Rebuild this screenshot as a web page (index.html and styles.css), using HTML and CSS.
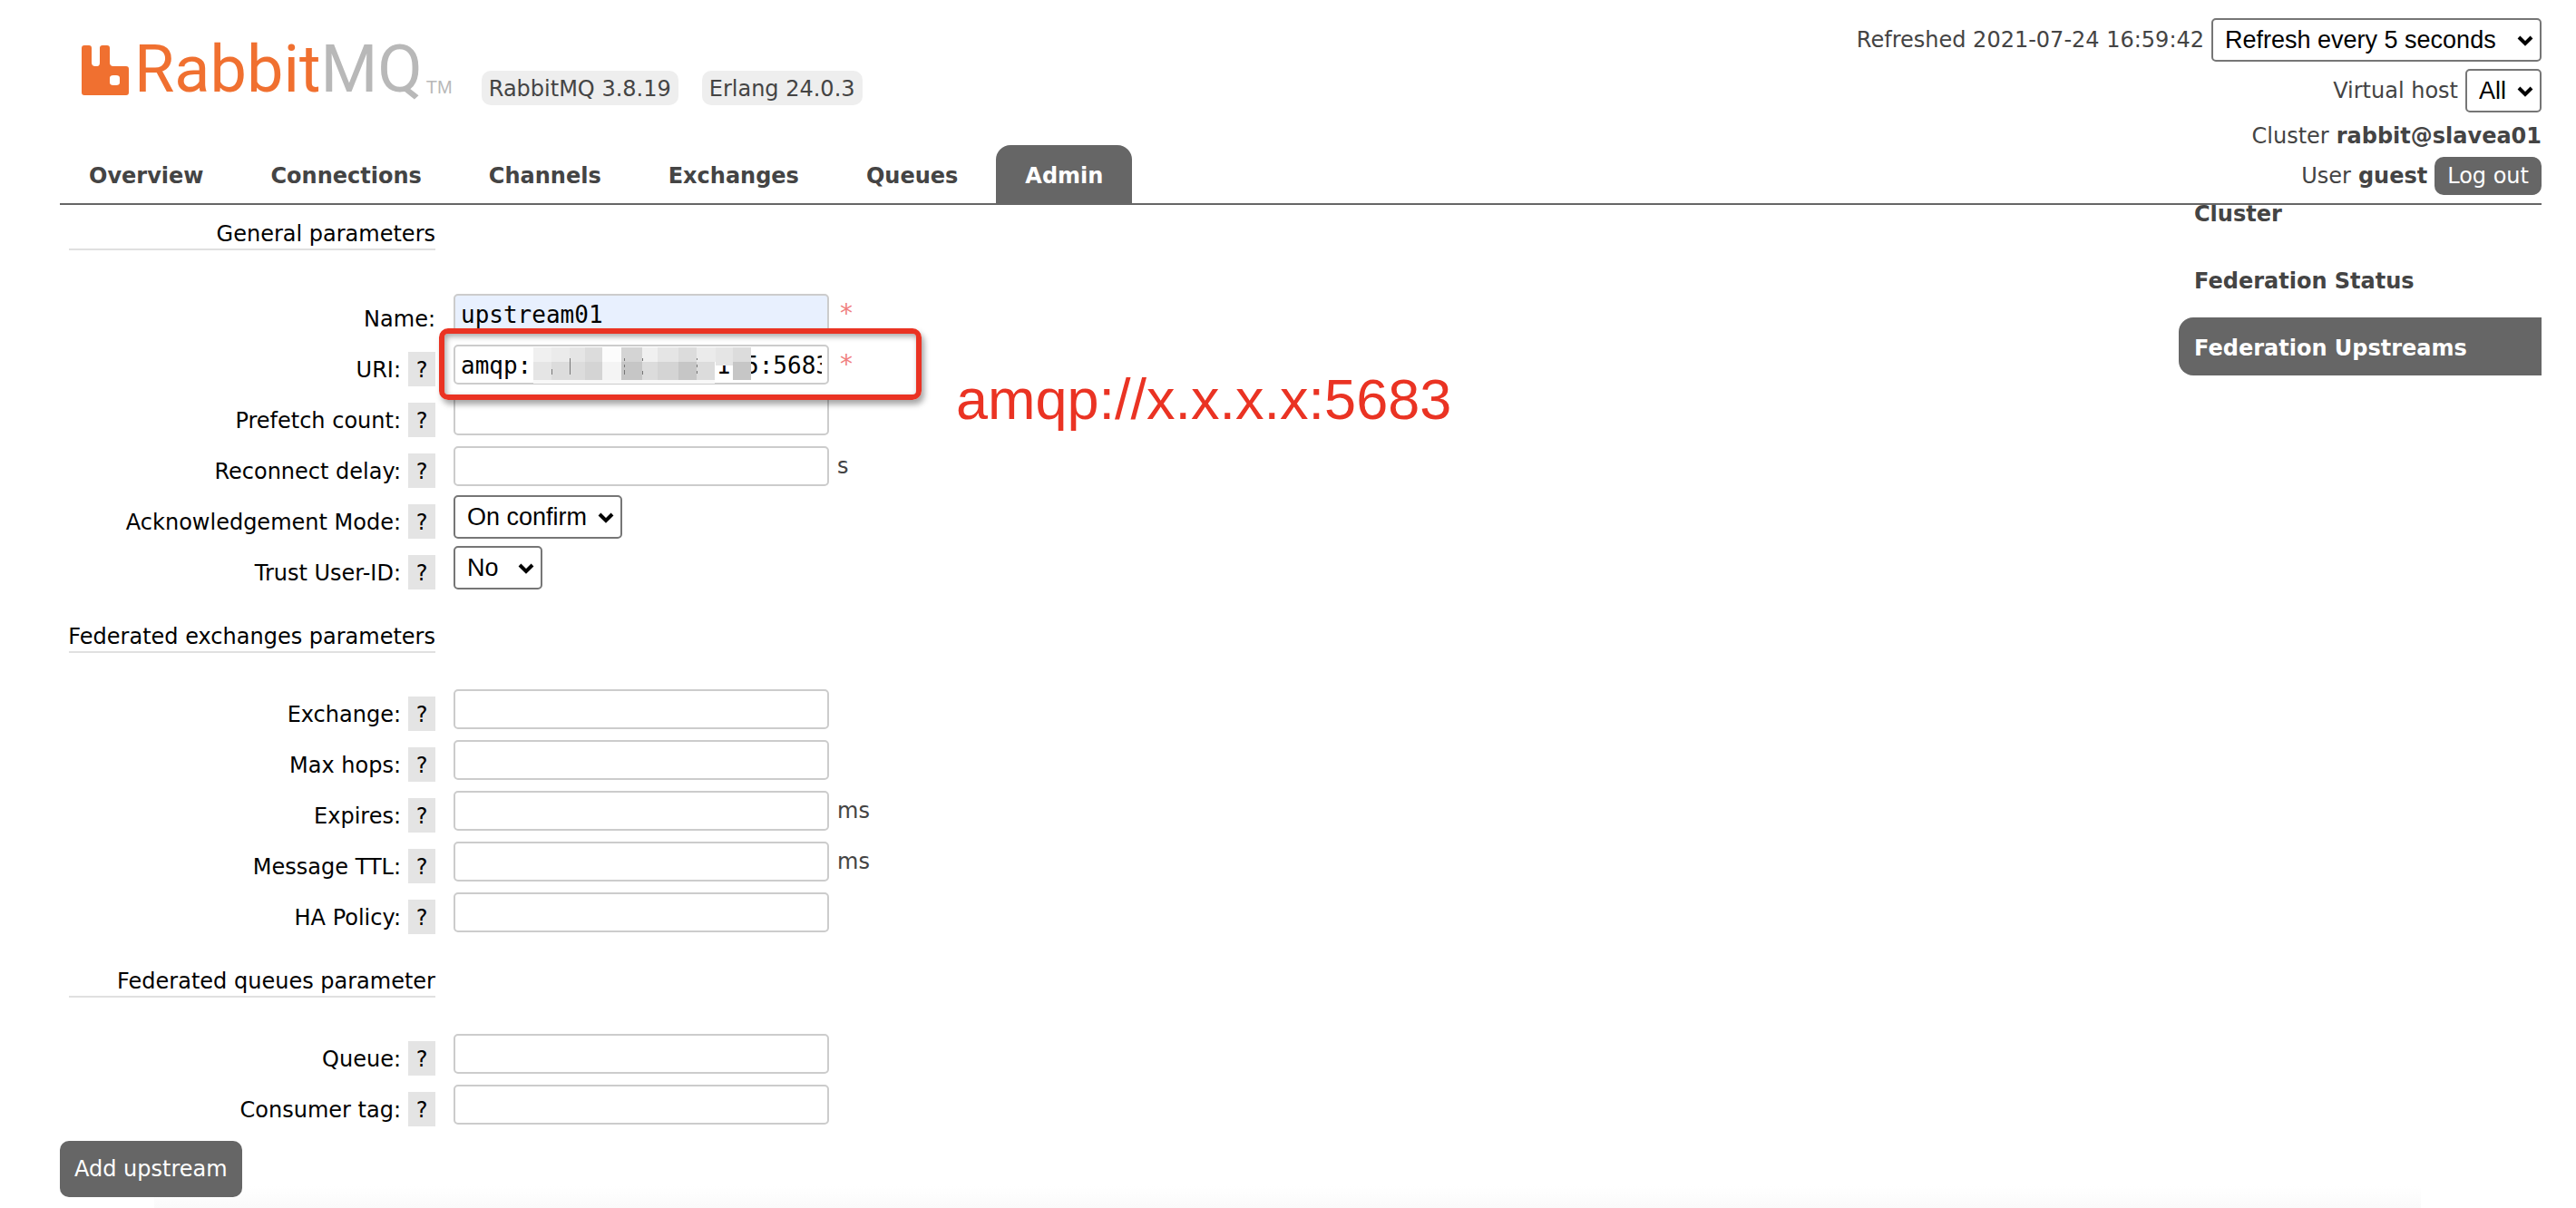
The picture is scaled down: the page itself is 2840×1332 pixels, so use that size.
FILE: index.html
```
<!DOCTYPE html>
<html lang="en">
<head>
<meta charset="utf-8">
<title>RabbitMQ Management</title>
<link rel="stylesheet" href="styles.css">
</head>
<body>
<header class="header">
  <div class="masthead">
    <a class="logo" href="#" aria-label="RabbitMQ">
      <svg class="logo-mark" viewBox="0 0 52 55" aria-hidden="true"><path fill-rule="evenodd" d="M3 0H8Q11 0 11 3V19Q11 23 15 23H17Q20 23 20 19V3Q20 0 23 0H28Q31 0 31 3V19Q31 23 35 23H49Q52 23 52 26V52Q52 55 49 55H3Q0 55 0 52V3Q0 0 3 0ZM35 33Q31 33 31 36V41Q31 44 35 44H38Q42 44 42 41V36Q42 33 38 33Z"/></svg>
      <span class="logo-name">Rabbit<span class="logo-grey">MQ</span></span>
      <span class="logo-tm">TM</span>
    </a>
    <span class="version">RabbitMQ 3.8.19</span>
    <span class="version">Erlang 24.0.3</span>
  </div>
  <nav class="tabs">
    <a class="tab" href="#">Overview</a>
    <a class="tab" href="#">Connections</a>
    <a class="tab" href="#">Channels</a>
    <a class="tab" href="#">Exchanges</a>
    <a class="tab" href="#">Queues</a>
    <a class="tab tab-active" href="#">Admin</a>
  </nav>
  <div class="session">
    <div class="session-row session-tall"><label for="refresh">Refreshed 2021-07-24 16:59:42</label>
      <span class="select-wrap"><select id="refresh" class="select select-refresh"><option>Refresh every 5 seconds</option></select><svg class="chevron" viewBox="0 0 18 12" aria-hidden="true"><path d="M2 2l7 7 7-7"/></svg></span></div>
    <div class="session-row session-tall"><label for="vhost">Virtual host</label>
      <span class="select-wrap"><select id="vhost" class="select select-vhost"><option>All</option></select><svg class="chevron" viewBox="0 0 18 12" aria-hidden="true"><path d="M2 2l7 7 7-7"/></svg></span></div>
    <div class="session-row">Cluster <b>rabbit@slavea01</b></div>
    <div class="session-row">User <b>guest</b> <button class="logout" type="button">Log out</button></div>
  </div>
</header>

<div class="page">
  <main class="main">
    <form>
      <section class="group">
        <h3 class="group-title group-title-first">General parameters</h3>
        <div class="row"><label class="label" for="name">Name:</label><div class="field"><input id="name" class="input input-filled" type="text" value="upstream01"><span class="required">*</span></div></div>
        <div class="row"><span class="label"><label for="uri">URI:</label><button class="help" type="button">?</button></span>
          <div class="field">
            <input id="uri" class="input" type="text" value="amqp:             1 5:5683"><span class="required">*</span>
            <svg class="mosaic" viewBox="0 0 240 40" aria-hidden="true">
              <path fill="#f8f8f8" d="M0 36h200v4H0z"/>
              <path fill="#f0f0f0" d="M0 0h20v16H0zM120 0h17v16h-17z"/>
              <path fill="#ebebeb" d="M20 0h20v16H20zM180 0h21v16h-21z"/>
              <path fill="#e5e5e5" d="M40 0h17v16H40zM137 0h23v16h-23zM201 0h19v20h-19zM0 16h20v20H0z"/>
              <path fill="#dcdcdc" d="M57 0h19v16H57zM160 0h20v16h-20zM220 0h20v16h-20zM20 16h37v20H20zM120 16h17v20h-17zM180 16h20v20h-20z"/>
              <path fill="#fcfcfc" d="M76 0h21v16H76z"/>
              <path fill="#f4f4f4" d="M76 16h21v20H76z"/>
              <path fill="#d4d4d4" d="M97 0h23v16H97zM57 16h19v20H57zM137 16h23v20h-23z"/>
              <path fill="#c6c6c6" d="M97 16h23v20H97zM160 16h20v20h-20zM220 16h20v20h-20z"/>
              <path stroke="#777" d="M40.500 12v18M20.500 24v6M100.500 12v3M100.500 19v3M100.500 25v5M120.500 12v3M120.500 26v4M180.500 12v2M180.500 19v3M180.500 26v3"/>
            </svg>
            <div class="marker"></div>
            <div class="note">amqp://x.x.x.x:5683</div>
          </div></div>
        <div class="row"><span class="label"><label for="prefetch">Prefetch count:</label><button class="help" type="button">?</button></span><div class="field"><input id="prefetch" class="input" type="text"></div></div>
        <div class="row"><span class="label"><label for="delay">Reconnect delay:</label><button class="help" type="button">?</button></span><div class="field"><input id="delay" class="input" type="text"><span class="unit">s</span></div></div>
        <div class="row"><span class="label"><label for="ack">Acknowledgement Mode:</label><button class="help" type="button">?</button></span><div class="field field-select"><span class="select-wrap"><select id="ack" class="select select-ack"><option>On confirm</option></select><svg class="chevron" viewBox="0 0 18 12" aria-hidden="true"><path d="M2 2l7 7 7-7"/></svg></span></div></div>
        <div class="row"><span class="label"><label for="trust">Trust User-ID:</label><button class="help" type="button">?</button></span><div class="field field-select"><span class="select-wrap"><select id="trust" class="select select-trust"><option>No</option></select><svg class="chevron" viewBox="0 0 18 12" aria-hidden="true"><path d="M2 2l7 7 7-7"/></svg></span></div></div>
      </section>
      <section class="group">
        <h3 class="group-title">Federated exchanges parameters</h3>
        <div class="row"><span class="label"><label for="exchange">Exchange:</label><button class="help" type="button">?</button></span><div class="field"><input id="exchange" class="input" type="text"></div></div>
        <div class="row"><span class="label"><label for="hops">Max hops:</label><button class="help" type="button">?</button></span><div class="field"><input id="hops" class="input" type="text"></div></div>
        <div class="row"><span class="label"><label for="expires">Expires:</label><button class="help" type="button">?</button></span><div class="field"><input id="expires" class="input" type="text"><span class="unit">ms</span></div></div>
        <div class="row"><span class="label"><label for="ttl">Message TTL:</label><button class="help" type="button">?</button></span><div class="field"><input id="ttl" class="input" type="text"><span class="unit">ms</span></div></div>
        <div class="row"><span class="label"><label for="ha">HA Policy:</label><button class="help" type="button">?</button></span><div class="field"><input id="ha" class="input" type="text"></div></div>
      </section>
      <section class="group">
        <h3 class="group-title">Federated queues parameter</h3>
        <div class="row"><span class="label"><label for="queue">Queue:</label><button class="help" type="button">?</button></span><div class="field"><input id="queue" class="input" type="text"></div></div>
        <div class="row"><span class="label"><label for="tag">Consumer tag:</label><button class="help" type="button">?</button></span><div class="field"><input id="tag" class="input" type="text"></div></div>
      </section>
      <button class="submit" type="button">Add upstream</button>
    </form>
  </main>
  <aside class="side">
    <a class="side-link" href="#">Cluster</a>
    <a class="side-link" href="#">Federation Status</a>
    <a class="side-link side-active" href="#">Federation Upstreams</a>
  </aside>
</div>
</body>
</html>
```
FILE: styles.css
```
* { box-sizing: border-box; }

body {
  margin: 0;
  min-height: 100vh;
  background: #fff linear-gradient(to top, #fafafa, #fff) 50% 100% / 88% 24px no-repeat;
  color: #444;
  font: 24px/34px Verdana, "DejaVu Sans", sans-serif;
}

a { color: inherit; text-decoration: none; }
button, input, select { margin: 0; }

/* Header */
.header {
  position: relative;
  z-index: 1;
  display: grid;
  grid-template-columns: 1fr auto;
  grid-template-rows: 160px auto;
  margin: 0 38px 0 66px;
  border-bottom: 2px solid #666;
  background: #fff;
}

.masthead { display: flex; align-items: flex-start; gap: 26px; padding: 49px 0 0 24px; }
.logo { display: flex; align-items: flex-end; height: 56px; margin-right: 6px; color: #f07030; }
.logo-mark { width: 52px; height: 55px; fill: currentColor; }
.logo-name { margin-left: 6px; font: 72px/56px Roboto, sans-serif; }
.logo-grey { color: #b8b8b8; }
.logo-tm { margin-left: 4px; color: #b8b8b8; font: 20px/18px "Liberation Sans", Arial, sans-serif; }
.version { margin-top: 29px; padding: 3px 8px 1px; border-radius: 10px; background: #eee; }

.tabs { grid-row: 2; display: flex; gap: 10px; }
.tab { padding: 17px 32px 13px; border-radius: 16px 16px 0 0; font-weight: bold; }
.tab-active { background: #666; color: #fff; }

.session {
  grid-column: 2;
  grid-row: 1 / 3;
  display: flex;
  flex-direction: column;
  align-items: flex-end;
  padding-top: 16px;
}
.session-row { display: flex; align-items: center; gap: 8px; height: 44px; }
.session-tall { height: 56px; line-height: 36px; }

.logout {
  height: 42px;
  padding: 0 14px;
  border: 0;
  border-radius: 10px;
  background: #666;
  color: #fff;
  font: inherit;
}

/* Drop-downs */
.select-wrap { position: relative; display: inline-flex; }
.select {
  height: 48px;
  padding: 0 13px;
  border: 2px solid #767676;
  border-radius: 5px;
  background: #fff;
  color: #000;
  font: 27px/40px Arial, "Liberation Sans", sans-serif;
  appearance: none;
}
.select-refresh { width: 364px; }
.select-vhost { width: 84px; }
.select-ack { width: 186px; }
.select-trust { width: 98px; }
.chevron {
  position: absolute;
  top: 19px;
  right: 9px;
  width: 18px;
  height: 12px;
  fill: none;
  stroke: #000;
  stroke-width: 4;
  pointer-events: none;
}

/* Content */
.page { display: flex; align-items: flex-start; justify-content: space-between; margin: 0 38px 0 66px; }
.main { flex: 1; padding: 14px 0 12px; }

.group { margin-bottom: 30px; }
.group:last-of-type { margin-bottom: 12px; }
.group-title {
  display: flex;
  justify-content: flex-end;
  width: 404px;
  margin: 0 0 34px 10px;
  padding-top: 2px;
  border-bottom: 2px solid #e0e0e0;
  color: #000;
  font: inherit;
  line-height: 32px;
  white-space: nowrap;
}
.group-title-first { margin-bottom: 42px; }

.row { display: flex; align-items: flex-start; height: 56px; padding: 6px 0 6px 10px; }
.label { display: flex; justify-content: flex-end; gap: 8px; width: 404px; padding-top: 8px; color: #000; line-height: 40px; }
.help { width: 30px; height: 38px; padding: 0; border: 0; background: #e4e4e4; color: #000; font: inherit; }

.field { position: relative; display: flex; align-items: center; margin-left: 20px; }
.field-select { margin-top: -2px; }
.input {
  width: 414px;
  height: 44px;
  padding: 2px 6px 0 6px;
  border: 2px solid #ccc;
  border-radius: 5px;
  background: #fff;
  color: #000;
  font: 26px/36px "DejaVu Sans Mono", monospace;
}
.input-filled { background: #e8f0fe; }
.unit { margin-left: 9px; }
.required { margin-left: 12px; color: #f08080; font-size: 28px; }

/* Annotation laid over the URI field */
.mosaic { position: absolute; top: 3px; left: 88px; width: 240px; height: 40px; }
.marker {
  position: absolute;
  z-index: 2;
  top: -18px;
  left: -16px;
  width: 532px;
  height: 79px;
  border: 6px solid #ea3323;
  border-radius: 10px;
  box-shadow: 3px 5px 6px rgba(0, 0, 0, .35), inset 2px 3px 6px rgba(0, 0, 0, .35);
}
.note {
  position: absolute;
  z-index: 2;
  top: 20px;
  left: 554px;
  color: #ea3323;
  font: 63px/80px "Liberation Sans", Arial, sans-serif;
  white-space: nowrap;
}

.submit {
  height: 62px;
  padding: 0 16px;
  border: 0;
  border-radius: 10px;
  background: #666;
  color: #fff;
  font: inherit;
}

/* Side navigation; its first entry tucks under the header */
.side { width: 400px; margin-top: -24px; }
.side-link { display: block; margin-bottom: 10px; padding: 17px 17px 13px; font-weight: bold; }
.side-active { border-radius: 16px 0 0 16px; background: #666; color: #fff; }
```
